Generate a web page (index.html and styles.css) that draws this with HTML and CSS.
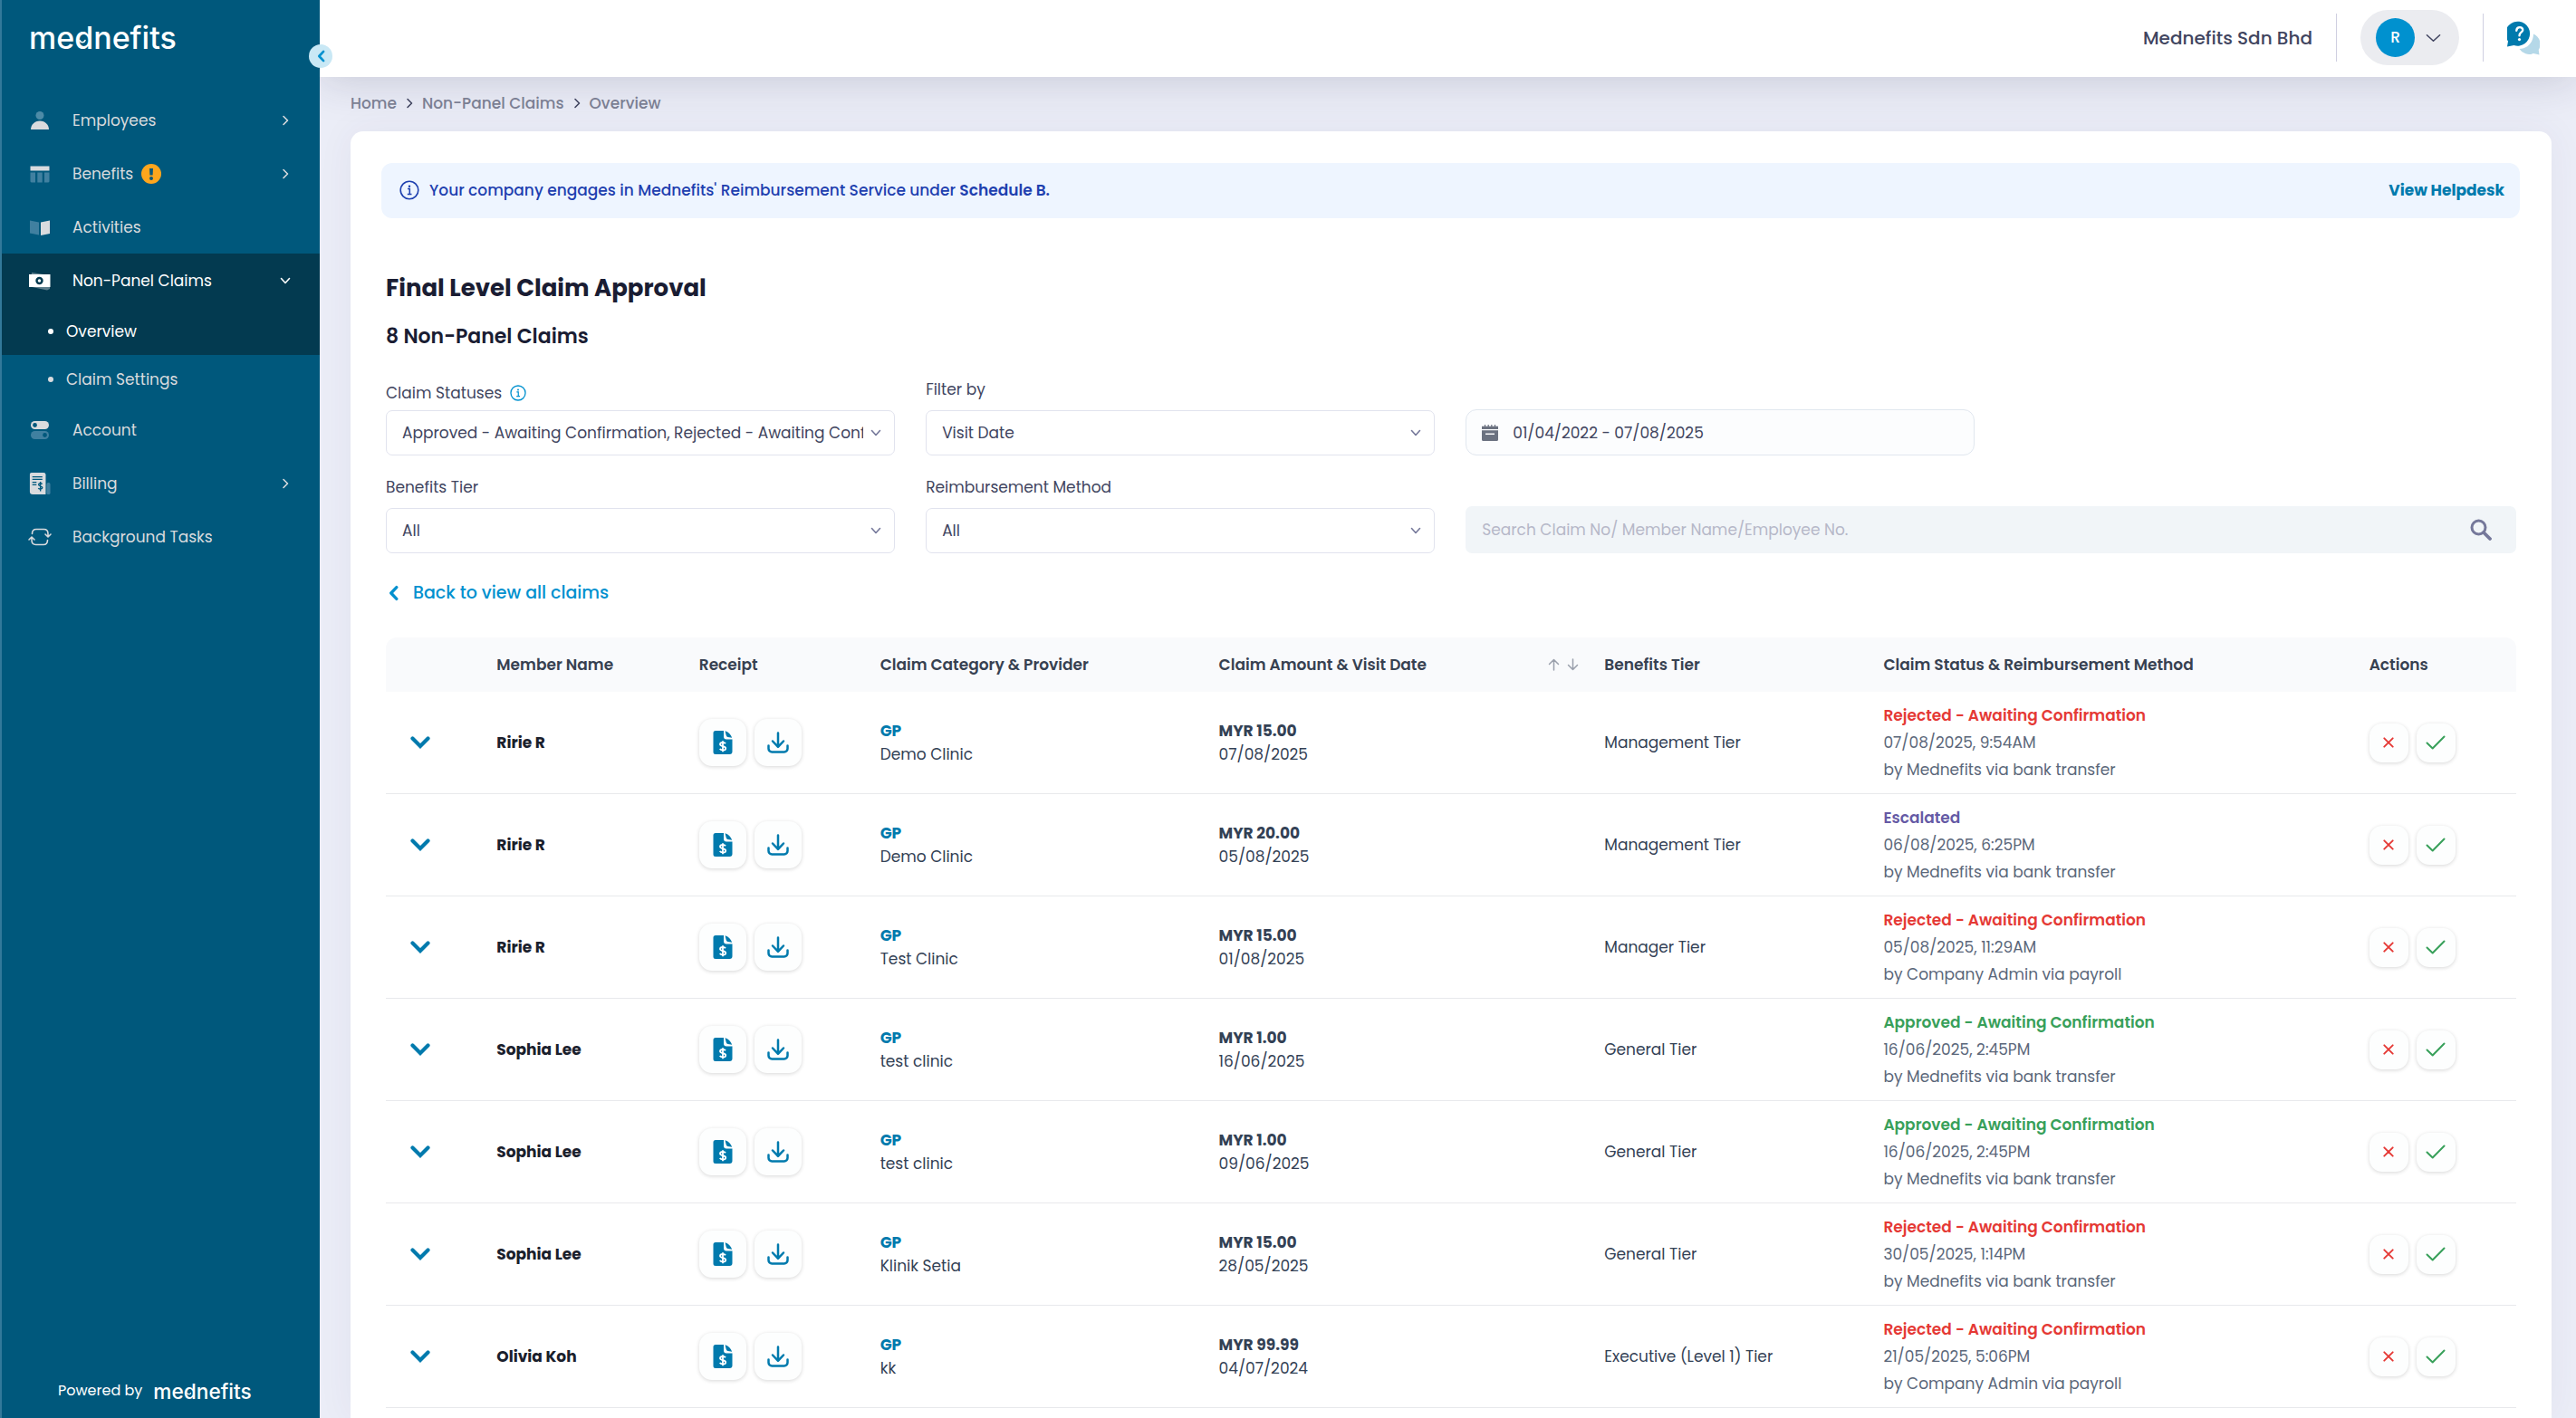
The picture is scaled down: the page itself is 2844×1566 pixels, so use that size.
FILE: index.html
```html
<!DOCTYPE html>
<html lang="en">
<head>
    <meta charset="UTF-8">
    <meta name="viewport" content="width=device-width, initial-scale=1.0">
    <title>Mednefits - Non-Panel Claims</title>
    <link rel="stylesheet" href="styles.css">
</head>
<body>
    <!-- Icon set -->
    <svg class="sprite" aria-hidden="true">
        <symbol id="chevron-right" viewBox="0 0 12 12"><path d="M4 1.500l4.500 4.500L4 10.500" fill="none" stroke="currentColor" stroke-width="1.600" stroke-linecap="round" stroke-linejoin="round"/></symbol>
        <symbol id="chevron-down" viewBox="0 0 12 12"><path d="M1.500 3.500L6 8.500l4.500-5" fill="none" stroke="currentColor" stroke-width="1.600" stroke-linecap="round" stroke-linejoin="round"/></symbol>
        <symbol id="chevron-thick" viewBox="0 0 22 14"><path d="M2.500 2.500L11 11l8.500-8.500" fill="none" stroke="currentColor" stroke-width="4.200" stroke-linecap="round" stroke-linejoin="miter"/></symbol>
        <symbol id="chevron-left" viewBox="0 0 10 16"><path d="M8 2.200L2.500 8 8 13.800" fill="none" stroke="currentColor" stroke-width="3" stroke-linecap="round" stroke-linejoin="round"/></symbol>
        <symbol id="info" viewBox="0 0 22 22"><circle cx="11" cy="11" r="9.800" fill="none" stroke="currentColor" stroke-width="1.600"/><circle cx="11" cy="6.700" r="1.200" fill="currentColor"/><path d="M9 9.500h2.300v6M8.800 15.500h4.700" fill="none" stroke="currentColor" stroke-width="1.500"/></symbol>
        <symbol id="receipt" viewBox="0 0 22 28"><path d="M3 1h9v6.500a3 3 0 0 0 3 3h6.500V24a3 3 0 0 1-3 3H3a2.500 2.500 0 0 1-2.500-2.500v-21A2.500 2.500 0 0 1 3 1z" fill="currentColor"/><path d="M13.500 1.300c3.500 1 6.500 4 7.700 7.500l-4.700-.8a2 2 0 0 1-1.800-1.900z" fill="currentColor"/><path d="M14 15.300c-.6-1-1.700-1.300-3-1.300-1.700 0-3 .8-3 2.100 0 3 6.200 1.300 6.200 4.300 0 1.300-1.400 2.100-3.100 2.100-1.500 0-2.800-.5-3.300-1.600M11 12.200V24.300" fill="none" stroke="#fff" stroke-width="1.800"/></symbol>
        <symbol id="download" viewBox="0 0 24 24"><path d="M12 1.500v15M6 10.500l6 6.300 6-6.300M1.500 15.500v3.300a3.700 3.700 0 0 0 3.700 3.700h13.600a3.700 3.700 0 0 0 3.700-3.700v-3.300" fill="none" stroke="currentColor" stroke-width="2.500" stroke-linecap="round" stroke-linejoin="round"/></symbol>
        <symbol id="cross" viewBox="0 0 12 12"><path d="M1.300 1.300l9.400 9.400M10.700 1.300l-9.400 9.400" stroke="currentColor" stroke-width="1.900" stroke-linecap="round"/></symbol>
        <symbol id="check" viewBox="0 0 22 16"><path d="M1.500 8.500l6.200 6L20.500 1.500" fill="none" stroke="currentColor" stroke-width="2" stroke-linecap="round" stroke-linejoin="round"/></symbol>
    </svg>

    <div class="app">
        <!-- Sidebar -->
        <aside class="sidebar">
            <a href="#" class="logo" aria-label="mednefits"><svg viewBox="0 0 170 42"><text x="0" y="34" class="logo-text">mednefits</text><path d="M56 24.500c1 3 5 3 6 0" fill="none" stroke="currentColor" stroke-width="1.600" stroke-linecap="round"/></svg></a>

            <nav class="menu">
                <a href="#" class="menu-item">
                    <svg class="menu-icon" viewBox="0 0 24 24"><circle cx="12" cy="6.500" r="4.500" fill="#4d8ba7"/><path d="M2 22c0-5 4-9.500 10-9.500S22 17 22 22z" fill="#d9dbde"/></svg>
                    <span>Employees</span>
                    <svg class="arrow"><use href="#chevron-right"/></svg>
                </a>
                <a href="#" class="menu-item">
                    <svg class="menu-icon" viewBox="0 0 24 24"><path d="M1.500 3.500h21v5h-21z" fill="#d9dbde"/><path d="M1.500 10.500h5.500v11H2.500l-1-1zM9.300 10.500h5.400v11H9.300zM17 10.500h5.500v10l-1 1H17z" fill="#4080a0"/></svg>
                    <span>Benefits</span>
                    <svg class="alert" viewBox="0 0 22 22"><circle cx="11" cy="11" r="11" fill="#ffa61d"/><path d="M9 5h4l-.4 7.500H9.400z" fill="#0b587b"/><circle cx="11" cy="16" r="2" fill="#0b587b"/></svg>
                    <svg class="arrow"><use href="#chevron-right"/></svg>
                </a>
                <a href="#" class="menu-item">
                    <svg class="menu-icon" viewBox="0 0 24 24"><path d="M1 4.500l10 2v14l-10-2z" fill="#4080a0"/><path d="M23 4.500l-10 2v14.500l10-2z" fill="#d9dbde"/></svg>
                    <span>Activities</span>
                </a>
                <div class="menu-group">
                    <a href="#" class="menu-item active">
                        <svg class="menu-icon" viewBox="0 0 24 24"><path d="M3 3l20 3v15l-3 1.500L1 18.500z" fill="#5f7f8d"/><path d="M0 5h23.500v14H0z" fill="#fff"/><circle cx="11.500" cy="12" r="3" fill="none" stroke="#033a50" stroke-width="2.400"/></svg>
                        <span>Non-Panel Claims</span>
                        <svg class="arrow"><use href="#chevron-down"/></svg>
                    </a>
                    <a href="#" class="sub-item active">Overview</a>
                </div>
                <a href="#" class="sub-item">Claim Settings</a>
                <a href="#" class="menu-item">
                    <svg class="menu-icon" viewBox="0 0 24 24"><rect x="2" y="2" width="20" height="9" rx="4.500" fill="#d9dbde"/><circle cx="6.500" cy="6.500" r="2.400" fill="#00587c"/><rect x="2" y="13" width="20" height="9" rx="4.500" fill="#4080a0"/><circle cx="17.500" cy="17.500" r="2.400" fill="#00587c"/></svg>
                    <span>Account</span>
                </a>
                <a href="#" class="menu-item">
                    <svg class="menu-icon" viewBox="0 0 24 26"><rect x="20" y="12" width="4.500" height="14" rx="2" fill="#4080a0"/><path d="M2 0h14.500a2.500 2.500 0 0 1 2.500 2.500V26H3.500A3.500 3.500 0 0 1 0 22.500V2a2 2 0 0 1 2-2z" fill="#d9dbde"/><path d="M3 5h12M3 8h12M3 11.500h5M3 14.500h5" stroke="#00587c" stroke-width="1.400"/><path d="M14.800 13.700c-1-1.500-4.300-1.300-4.300.7 0 2.200 4.500 1.200 4.500 3.600 0 2-3.700 2.200-4.800.5M12.700 10.700v11.500" fill="none" stroke="#00587c" stroke-width="1.500"/></svg>
                    <span>Billing</span>
                    <svg class="arrow"><use href="#chevron-right"/></svg>
                </a>
                <a href="#" class="menu-item">
                    <svg class="menu-icon" viewBox="0 0 24 24"><path d="M3.500 8.500C3.500 5 5 3.500 8 3.500h8.500c3 0 4.500 1.500 4.500 5v3M18 9l3 3 3-3M20.500 15.500c0 3.500-1.500 5-4.500 5H7.500c-3 0-4.500-1.500-4.500-5v-3M0 15l3-3 3 3" fill="none" stroke="#d9dbde" stroke-width="1.600" stroke-linecap="round" stroke-linejoin="round"/></svg>
                    <span>Background Tasks</span>
                </a>
            </nav>

            <div class="powered">
                <span>Powered by</span>
                <svg class="logo-small" viewBox="0 0 170 42"><text x="0" y="34" class="logo-text">mednefits</text><path d="M56 24.500c1 3 5 3 6 0" fill="none" stroke="currentColor" stroke-width="1.600" stroke-linecap="round"/></svg>
            </div>

            <button class="toggle" aria-label="Collapse menu"><svg><use href="#chevron-left"/></svg></button>
        </aside>

        <div class="page">
            <!-- Top bar -->
            <header class="topbar">
                <span class="company">Mednefits Sdn Bhd</span>
                <span class="divider"></span>
                <button class="profile" aria-label="Account menu">
                    <span class="avatar">R</span>
                    <svg viewBox="0 0 18 10"><path d="M1.500 1.500L9 8.500l7.500-7" fill="none" stroke="currentColor" stroke-width="1.600" stroke-linecap="round" stroke-linejoin="round"/></svg>
                </button>
                <span class="divider"></span>
                <a href="#" class="help" aria-label="Help">
                    <svg viewBox="0 0 36 38"><path d="M35.500 37.500l-.8-5.500A12 12 0 0 0 29 14.500C29 24 22 31 13.500 31a12.500 12.500 0 0 0 15.500 5z" fill="#b5d8e8"/><path d="M0 28.500l1-6A13.500 13.500 0 1 1 7.500 27z" fill="#007aad"/><path d="M10.300 10.800c.2-5.300 7.400-4.400 6.900-.5-.3 2.500-3.700 2.500-3.700 6" fill="none" stroke="#fff" stroke-width="2.400" stroke-linecap="round"/><circle cx="13.500" cy="20.600" r="1.600" fill="#fff"/></svg>
                </a>
            </header>

            <nav class="breadcrumb" aria-label="Breadcrumb">
                <a href="#">Home</a>
                <svg><use href="#chevron-right"/></svg>
                <a href="#">Non-Panel Claims</a>
                <svg><use href="#chevron-right"/></svg>
                <a href="#">Overview</a>
            </nav>

            <main class="card">
                <div class="banner">
                    <svg class="info"><use href="#info"/></svg>
                    <p>Your company engages in Mednefits' Reimbursement Service under <strong>Schedule B.</strong></p>
                    <a href="#">View Helpdesk</a>
                </div>

                <div class="content">
                    <h1>Final Level Claim Approval</h1>
                    <h2>8 Non-Panel Claims</h2>

                    <!-- Filters -->
                    <form class="filters">
                        <div class="field">
                            <label for="statuses">Claim Statuses <svg class="info"><use href="#info"/></svg></label>
                            <div class="select">
                                <select id="statuses"><option>Approved - Awaiting Confirmation, Rejected - Awaiting Confirmation</option></select>
                                <svg><use href="#chevron-down"/></svg>
                            </div>
                        </div>
                        <div class="field">
                            <label for="filterBy">Filter by</label>
                            <div class="select">
                                <select id="filterBy"><option>Visit Date</option></select>
                                <svg><use href="#chevron-down"/></svg>
                            </div>
                        </div>
                        <div class="field">
                            <div class="date">
                                <svg viewBox="0 0 18 18"><path d="M3.500 0v3M7.200 0v3M10.800 0v3M14.500 0v3" stroke="#6b7280" stroke-width="1.200"/><path d="M0 1.800h18V5H0zM0 6.200h18v10.300a1.500 1.500 0 0 1-1.500 1.500h-15A1.500 1.500 0 0 1 0 16.500z" fill="#6b7280"/><path d="M4 10.300h10" stroke="#fff" stroke-width="1.500"/></svg>
                                <input type="text" aria-label="Date range" value="01/04/2022 - 07/08/2025">
                            </div>
                        </div>
                        <div class="field row-two first">
                            <label for="tier">Benefits Tier</label>
                            <div class="select">
                                <select id="tier"><option>All</option></select>
                                <svg><use href="#chevron-down"/></svg>
                            </div>
                        </div>
                        <div class="field row-two">
                            <label for="method">Reimbursement Method</label>
                            <div class="select">
                                <select id="method"><option>All</option></select>
                                <svg><use href="#chevron-down"/></svg>
                            </div>
                        </div>
                        <div class="field row-two wide">
                            <div class="search">
                                <input type="text" aria-label="Search claims" placeholder="Search Claim No/ Member Name/Employee No.">
                                <button type="button" aria-label="Search"><svg viewBox="0 0 24 24"><circle cx="9.500" cy="9.500" r="7.500" fill="none" stroke="currentColor" stroke-width="3"/><path d="M15 15l7 7" stroke="currentColor" stroke-width="3.800" stroke-linecap="round"/></svg></button>
                            </div>
                        </div>
                    </form>

                    <a href="#" class="back"><svg><use href="#chevron-left"/></svg>Back to view all claims</a>

                    <!-- Claims -->
                    <table class="claims">
                        <thead>
                            <tr>
                                <th class="col-toggle"></th>
                                <th class="col-member">Member Name</th>
                                <th class="col-receipt">Receipt</th>
                                <th class="col-category">Claim Category &amp; Provider</th>
                                <th class="col-amount">
                                    <div class="sortable">
                                        Claim Amount &amp; Visit Date
                                        <svg viewBox="0 0 34 14"><path d="M6.500 13V1.500M1.500 6.500l5-5 5 5M27.500 1v11.500M22.500 7.500l5 5 5-5" fill="none" stroke="#9aa0ac" stroke-width="1.500" stroke-linecap="round" stroke-linejoin="round"/></svg>
                                    </div>
                                </th>
                                <th class="col-tier">Benefits Tier</th>
                                <th class="col-status">Claim Status &amp; Reimbursement Method</th>
                                <th class="col-actions">Actions</th>
                            </tr>
                        </thead>
                        <tbody>
                            <tr>
                                <td><button class="expand" aria-label="Expand"><svg><use href="#chevron-thick"/></svg></button></td>
                                <td class="name">Ririe R</td>
                                <td><div class="buttons">
                                    <button class="tile" aria-label="View receipt"><svg class="icon-receipt"><use href="#receipt"/></svg></button>
                                    <button class="tile" aria-label="Download receipt"><svg class="icon-download"><use href="#download"/></svg></button>
                                </div></td>
                                <td><b class="category">GP</b><br>Demo Clinic</td>
                                <td><b>MYR 15.00</b><br>07/08/2025</td>
                                <td>Management Tier</td>
                                <td class="status"><b class="rejected">Rejected - Awaiting Confirmation</b><br>07/08/2025, 9:54AM<br>by Mednefits via bank transfer</td>
                                <td><div class="buttons">
                                    <button class="tile small reject" aria-label="Reject"><svg><use href="#cross"/></svg></button>
                                    <button class="tile small approve" aria-label="Approve"><svg><use href="#check"/></svg></button>
                                </div></td>
                            </tr>
                            <tr>
                                <td><button class="expand" aria-label="Expand"><svg><use href="#chevron-thick"/></svg></button></td>
                                <td class="name">Ririe R</td>
                                <td><div class="buttons">
                                    <button class="tile" aria-label="View receipt"><svg class="icon-receipt"><use href="#receipt"/></svg></button>
                                    <button class="tile" aria-label="Download receipt"><svg class="icon-download"><use href="#download"/></svg></button>
                                </div></td>
                                <td><b class="category">GP</b><br>Demo Clinic</td>
                                <td><b>MYR 20.00</b><br>05/08/2025</td>
                                <td>Management Tier</td>
                                <td class="status"><b class="escalated">Escalated</b><br>06/08/2025, 6:25PM<br>by Mednefits via bank transfer</td>
                                <td><div class="buttons">
                                    <button class="tile small reject" aria-label="Reject"><svg><use href="#cross"/></svg></button>
                                    <button class="tile small approve" aria-label="Approve"><svg><use href="#check"/></svg></button>
                                </div></td>
                            </tr>
                            <tr>
                                <td><button class="expand" aria-label="Expand"><svg><use href="#chevron-thick"/></svg></button></td>
                                <td class="name">Ririe R</td>
                                <td><div class="buttons">
                                    <button class="tile" aria-label="View receipt"><svg class="icon-receipt"><use href="#receipt"/></svg></button>
                                    <button class="tile" aria-label="Download receipt"><svg class="icon-download"><use href="#download"/></svg></button>
                                </div></td>
                                <td><b class="category">GP</b><br>Test Clinic</td>
                                <td><b>MYR 15.00</b><br>01/08/2025</td>
                                <td>Manager Tier</td>
                                <td class="status"><b class="rejected">Rejected - Awaiting Confirmation</b><br>05/08/2025, 11:29AM<br>by Company Admin via payroll</td>
                                <td><div class="buttons">
                                    <button class="tile small reject" aria-label="Reject"><svg><use href="#cross"/></svg></button>
                                    <button class="tile small approve" aria-label="Approve"><svg><use href="#check"/></svg></button>
                                </div></td>
                            </tr>
                            <tr>
                                <td><button class="expand" aria-label="Expand"><svg><use href="#chevron-thick"/></svg></button></td>
                                <td class="name">Sophia Lee</td>
                                <td><div class="buttons">
                                    <button class="tile" aria-label="View receipt"><svg class="icon-receipt"><use href="#receipt"/></svg></button>
                                    <button class="tile" aria-label="Download receipt"><svg class="icon-download"><use href="#download"/></svg></button>
                                </div></td>
                                <td><b class="category">GP</b><br>test clinic</td>
                                <td><b>MYR 1.00</b><br>16/06/2025</td>
                                <td>General Tier</td>
                                <td class="status"><b class="approved">Approved - Awaiting Confirmation</b><br>16/06/2025, 2:45PM<br>by Mednefits via bank transfer</td>
                                <td><div class="buttons">
                                    <button class="tile small reject" aria-label="Reject"><svg><use href="#cross"/></svg></button>
                                    <button class="tile small approve" aria-label="Approve"><svg><use href="#check"/></svg></button>
                                </div></td>
                            </tr>
                            <tr>
                                <td><button class="expand" aria-label="Expand"><svg><use href="#chevron-thick"/></svg></button></td>
                                <td class="name">Sophia Lee</td>
                                <td><div class="buttons">
                                    <button class="tile" aria-label="View receipt"><svg class="icon-receipt"><use href="#receipt"/></svg></button>
                                    <button class="tile" aria-label="Download receipt"><svg class="icon-download"><use href="#download"/></svg></button>
                                </div></td>
                                <td><b class="category">GP</b><br>test clinic</td>
                                <td><b>MYR 1.00</b><br>09/06/2025</td>
                                <td>General Tier</td>
                                <td class="status"><b class="approved">Approved - Awaiting Confirmation</b><br>16/06/2025, 2:45PM<br>by Mednefits via bank transfer</td>
                                <td><div class="buttons">
                                    <button class="tile small reject" aria-label="Reject"><svg><use href="#cross"/></svg></button>
                                    <button class="tile small approve" aria-label="Approve"><svg><use href="#check"/></svg></button>
                                </div></td>
                            </tr>
                            <tr>
                                <td><button class="expand" aria-label="Expand"><svg><use href="#chevron-thick"/></svg></button></td>
                                <td class="name">Sophia Lee</td>
                                <td><div class="buttons">
                                    <button class="tile" aria-label="View receipt"><svg class="icon-receipt"><use href="#receipt"/></svg></button>
                                    <button class="tile" aria-label="Download receipt"><svg class="icon-download"><use href="#download"/></svg></button>
                                </div></td>
                                <td><b class="category">GP</b><br>Klinik Setia</td>
                                <td><b>MYR 15.00</b><br>28/05/2025</td>
                                <td>General Tier</td>
                                <td class="status"><b class="rejected">Rejected - Awaiting Confirmation</b><br>30/05/2025, 1:14PM<br>by Mednefits via bank transfer</td>
                                <td><div class="buttons">
                                    <button class="tile small reject" aria-label="Reject"><svg><use href="#cross"/></svg></button>
                                    <button class="tile small approve" aria-label="Approve"><svg><use href="#check"/></svg></button>
                                </div></td>
                            </tr>
                            <tr>
                                <td><button class="expand" aria-label="Expand"><svg><use href="#chevron-thick"/></svg></button></td>
                                <td class="name">Olivia Koh</td>
                                <td><div class="buttons">
                                    <button class="tile" aria-label="View receipt"><svg class="icon-receipt"><use href="#receipt"/></svg></button>
                                    <button class="tile" aria-label="Download receipt"><svg class="icon-download"><use href="#download"/></svg></button>
                                </div></td>
                                <td><b class="category">GP</b><br>kk</td>
                                <td><b>MYR 99.99</b><br>04/07/2024</td>
                                <td>Executive (Level 1) Tier</td>
                                <td class="status"><b class="rejected">Rejected - Awaiting Confirmation</b><br>21/05/2025, 5:06PM<br>by Company Admin via payroll</td>
                                <td><div class="buttons">
                                    <button class="tile small reject" aria-label="Reject"><svg><use href="#cross"/></svg></button>
                                    <button class="tile small approve" aria-label="Approve"><svg><use href="#check"/></svg></button>
                                </div></td>
                            </tr>
                        </tbody>
                    </table>
                </div>
            </main>
        </div>
    </div>
</body>
</html>
```
FILE: styles.css
```css
/* General Styles */
* {
    box-sizing: border-box;
}
body {
    margin: 0;
    font-family: 'Poppins', 'Inter', sans-serif;
    font-size: 17px;
    line-height: 26px;
    color: #414560;
    background-color: #ebedf7;
}
a {
    color: inherit;
    text-decoration: none;
}
button {
    padding: 0;
    border: none;
    background: none;
    font: inherit;
    color: inherit;
    cursor: pointer;
}
h1, h2, p {
    margin: 0;
}
.sprite {
    position: absolute;
    width: 0;
    height: 0;
}
.app {
    display: flex;
    height: 100vh;
    overflow: hidden;
}

/* Sidebar */
.sidebar {
    position: relative;
    z-index: 2;
    display: flex;
    flex-direction: column;
    flex: 0 0 353px;
    background-color: #00587c;
    border-left: 2px solid #33799a;
    color: #d9dbde;
}
.logo {
    height: 103px;
    padding: 20px 0 0 30px;
    color: #ffffff;
}
.logo svg {
    width: 170px;
    height: 42px;
    overflow: visible;
}
.logo-text {
    font-family: 'Inter', sans-serif;
    font-size: 34px;
    font-weight: 500;
    fill: #ffffff;
}
.menu {
    flex: 1;
}
.menu-item {
    display: flex;
    align-items: center;
    height: 59px;
    padding: 0 32px 0 30px;
}
.menu-icon {
    width: 24px;
    height: 24px;
    margin-right: 24px;
    overflow: visible;
}
.alert {
    width: 22px;
    height: 22px;
    margin-left: 9px;
}
.arrow {
    width: 12px;
    height: 12px;
    margin-left: auto;
}
.menu-group {
    background-color: #033a50;
}
.sub-item {
    display: flex;
    align-items: center;
    height: 53px;
    padding-left: 51px;
}
.sub-item::before {
    content: "";
    width: 6px;
    height: 6px;
    margin-right: 14px;
    border-radius: 50%;
    background-color: currentColor;
}
.active {
    color: #ffffff;
}
.powered {
    display: flex;
    align-items: center;
    gap: 12px;
    padding: 0 0 16px 62px;
    color: #ffffff;
    font-size: 16px;
}
.logo-small {
    width: 114px;
    height: 28px;
    overflow: visible;
}
.toggle {
    position: absolute;
    top: 49px;
    right: -14px;
    display: flex;
    align-items: center;
    justify-content: center;
    width: 26px;
    height: 26px;
    border-radius: 50%;
    background-color: #c9e8f5;
    color: #0091cf;
}
.toggle svg {
    width: 9px;
    height: 14px;
}

/* Top bar */
.page {
    display: flex;
    flex-direction: column;
    flex: 1;
    min-width: 0;
}
.topbar {
    display: flex;
    flex-shrink: 0;
    align-items: center;
    justify-content: flex-end;
    gap: 26px;
    height: 85px;
    padding: 0 40px 2px 0;
    background-color: #ffffff;
    box-shadow: 0 4px 48px rgba(40, 40, 70, 0.18);
}
.company {
    font-size: 20px;
    font-weight: 500;
}
.divider {
    width: 1px;
    height: 53px;
    background-color: #cfcfe0;
}
.profile {
    display: flex;
    align-items: center;
    gap: 12px;
    height: 61px;
    padding: 0 20px 0 17px;
    border-radius: 31px;
    background-color: #ebecf0;
}
.profile svg {
    width: 17px;
    height: 10px;
}
.avatar {
    width: 43px;
    height: 43px;
    border-radius: 50%;
    background-color: #0091cf;
    color: #ffffff;
    font-weight: 500;
    line-height: 43px;
}
.help svg {
    display: block;
    width: 36px;
    height: 38px;
}

/* Breadcrumb */
.breadcrumb {
    display: flex;
    flex-shrink: 0;
    align-items: center;
    gap: 8px;
    height: 60px;
    padding: 0 0 2px 34px;
    color: #7b7f93;
    font-weight: 500;
}
.breadcrumb svg {
    width: 12px;
    height: 12px;
    color: #414560;
}

/* Card */
.card {
    flex: 1;
    min-height: 0;
    margin: 0 27px 0 34px;
    padding: 35px 35px 0 34px;
    border-radius: 14px 14px 0 0;
    background-color: #ffffff;
    box-shadow: 0 0 40px rgba(60, 50, 110, 0.06);
}
.banner {
    display: flex;
    align-items: center;
    gap: 11px;
    height: 61px;
    padding: 0 17px 2px 20px;
    border-radius: 12px;
    background-color: #eef5ff;
    color: #1e40af;
    font-weight: 500;
}
.info {
    width: 22px;
    height: 22px;
}
.banner strong {
    font-weight: 600;
}
.banner a {
    margin-left: auto;
    color: #007aad;
    font-weight: 700;
}
.content {
    padding: 59px 4px 0 5px;
}
h1 {
    color: #1a1d33;
    font-size: 26px;
    font-weight: 700;
    line-height: 36px;
}
h2 {
    margin-top: 20px;
    color: #1a1d33;
    font-size: 22px;
    font-weight: 600;
    line-height: 32px;
}

/* Filters */
.filters {
    display: grid;
    grid-template-columns: 23.9% 23.9% 23.9% 1fr;
    column-gap: 34px;
    margin-top: 29px;
}
.field {
    display: flex;
    flex-direction: column;
    justify-content: flex-end;
    height: 86px;
}
.row-two {
    height: 108px;
}
.first {
    grid-column: 1;
}
.wide {
    grid-column: 3 / 5;
}
.field label {
    display: flex;
    align-items: center;
    gap: 9px;
    margin-bottom: 10px;
}
.field:first-child label {
    margin-bottom: 6px;
}
.field label .info {
    width: 18px;
    height: 18px;
    color: #0091cf;
}
.select {
    display: grid;
    align-items: center;
}
.select select,
.select svg {
    grid-area: 1 / 1;
}
.select select {
    width: 100%;
    height: 50px;
    padding: 0 34px 0 17px;
    border: 1px solid #e1e3ee;
    border-radius: 7px;
    background-color: #ffffff;
    color: #414560;
    font: inherit;
    appearance: none;
}
.select svg {
    justify-self: end;
    width: 12px;
    height: 12px;
    margin-right: 15px;
    color: #75789a;
    pointer-events: none;
}
.date {
    display: flex;
    align-items: center;
    gap: 16px;
    height: 51px;
    padding: 0 17px;
    border: 1px solid #e1e7ef;
    border-radius: 12px;
    background-color: #fcfdfe;
}
.date svg {
    width: 18px;
    height: 18px;
}
.date input,
.search input {
    flex: 1;
    padding: 0;
    border: none;
    background: none;
    color: #414560;
    font: inherit;
}
.search {
    display: flex;
    align-items: center;
    height: 52px;
    padding: 0 27px 0 18px;
    border-radius: 7px;
    background-color: #f1f5f8;
}
.search input::placeholder {
    color: #b6b8c8;
}
.search svg {
    display: block;
    width: 24px;
    height: 24px;
    color: #75789a;
}
.back {
    display: inline-flex;
    align-items: center;
    gap: 16px;
    margin: 31px 0 36px 3px;
    color: #0091cf;
    font-size: 19px;
    font-weight: 500;
}
.back svg {
    width: 11px;
    height: 18px;
}

/* Claims table */
.claims {
    width: 100%;
    border-collapse: separate;
    border-spacing: 0;
    table-layout: fixed;
}
.claims th {
    height: 60px;
    padding: 0;
    background-color: #f9fafc;
    color: #374151;
    font-weight: 600;
    text-align: left;
}
.claims th:first-child {
    border-top-left-radius: 12px;
}
.claims th:last-child {
    border-top-right-radius: 12px;
}
.claims td {
    height: 113px;
    padding: 0;
    border-bottom: 1px solid #e8e9ec;
    color: #334155;
}
.claims b {
    font-weight: 700;
}
.col-toggle {
    width: 5.2%;
}
.col-member {
    width: 9.5%;
}
.col-receipt {
    width: 8.5%;
}
.col-category {
    width: 15.9%;
}
.col-amount {
    width: 18.1%;
}
.col-tier {
    width: 13.1%;
}
.col-status {
    width: 22.8%;
}
.col-actions {
    width: 6.9%;
}
.sortable {
    display: flex;
    align-items: center;
    justify-content: space-between;
    padding-right: 28px;
}
.sortable svg {
    width: 34px;
    height: 14px;
}
.expand {
    display: block;
    margin-left: 27px;
    color: #007aad;
}
.expand svg {
    display: block;
    width: 22px;
    height: 14px;
}
.claims .name {
    color: #1a202c;
    font-weight: 700;
}
.claims .category {
    color: #007aad;
}
.buttons {
    display: flex;
    gap: 9px;
}
.tile {
    display: flex;
    align-items: center;
    justify-content: center;
    width: 52px;
    height: 52px;
    border-radius: 14px;
    background-color: #fdfefe;
    box-shadow: 0 1px 4px rgba(0, 0, 0, 0.16);
    color: #007aad;
}
.small {
    width: 43px;
    height: 43px;
}
.icon-receipt {
    width: 22px;
    height: 28px;
}
.icon-download {
    width: 24px;
    height: 24px;
}
.claims .status {
    color: #5b677a;
    line-height: 30px;
}
.claims .status b {
    font-weight: 600;
}
.claims .rejected {
    color: #e53935;
}
.claims .escalated {
    color: #655aa5;
}
.claims .approved {
    color: #38a05a;
}
.reject {
    color: #e53935;
}
.approve {
    color: #38a05a;
}
.reject svg {
    width: 12px;
    height: 12px;
}
.approve svg {
    width: 22px;
    height: 16px;
}
```
